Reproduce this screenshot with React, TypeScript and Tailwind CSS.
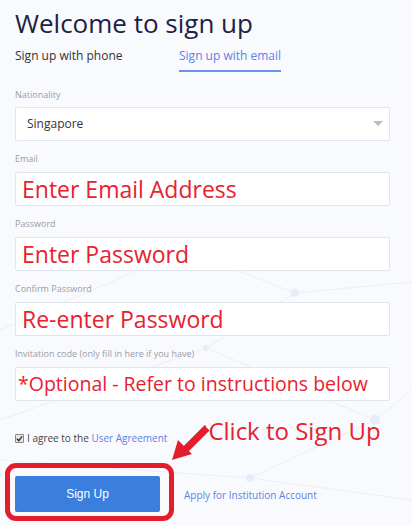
export default function App() {
  const fields = [
    { label: 'Email', text: 'Enter Email Address', size: 'text-[23px] pl-[6px]' },
    { label: 'Password', text: 'Enter Password', size: 'text-[23px] pl-[6px]' },
    { label: 'Confirm Password', text: 'Re-enter Password', size: 'text-[23px] pl-[6px]' },
    {
      label: 'Invitation code (only fill in here if you have)',
      text: '*Optional - Refer to instructions below',
      size: 'text-[19.5px] pl-[2px]',
    },
  ]

  return (
    <div
      className="relative w-[412px] h-[526px] overflow-hidden bg-[#f9fafd]"
      style={{ fontFamily: '"Open Sans", "Noto Sans", sans-serif' }}
    >
      {/* faint network pattern in the background */}
      <svg className="absolute inset-0" width="412" height="526" viewBox="0 0 412 526">
        <g stroke="#eceef7" strokeWidth="1" fill="none">
          <line x1="0" y1="330" x2="185" y2="250" />
          <line x1="185" y1="250" x2="295" y2="293" />
          <line x1="295" y1="293" x2="206" y2="348" />
          <line x1="206" y1="348" x2="0" y2="420" />
          <line x1="295" y1="293" x2="412" y2="282" />
          <line x1="206" y1="348" x2="375" y2="420" />
          <line x1="375" y1="420" x2="250" y2="478" />
          <line x1="250" y1="478" x2="412" y2="500" />
          <line x1="375" y1="420" x2="412" y2="390" />
          <line x1="0" y1="460" x2="250" y2="478" />
        </g>
        <g fill="#e8ebf8">
          <circle cx="295" cy="293" r="4" />
          <circle cx="206" cy="348" r="3" />
          <circle cx="375" cy="420" r="5" />
          <circle cx="250" cy="478" r="4" />
          <circle cx="185" cy="250" r="2" />
        </g>
      </svg>

      <div className="relative flex flex-col pl-[15px] pr-[22px]">
        <h1 className="mt-[3px] text-[26px] leading-[40px] text-[#1d2242]">Welcome to sign up</h1>

        <div className="mt-[4px] flex text-[12px] leading-[18px]">
          <div className="w-[164px] text-[#333]">Sign up with phone</div>
          <div className="flex flex-col text-[#5b83e6]">
            <span>Sign up with email</span>
            <span className="mt-[5px] h-[2px] bg-[#6b8ff0]" />
          </div>
        </div>

        <div className="mt-[17px] text-[9px] leading-[12px] text-[#9a9ca6]">Nationality</div>
        <div className="mt-[6px] flex h-[34px] items-center justify-between rounded-[2px] border border-[#e3e5ee] bg-white pl-[11px] pr-[6px]">
          <span className="text-[12px] text-[#333]">Singapore</span>
          <svg width="10" height="6" viewBox="0 0 10 6">
            <path d="M0 0 L10 0 L5 5 Z" fill="#b9bcc4" />
          </svg>
        </div>

        {fields.map((f) => (
          <div key={f.label} className="flex flex-col">
            <div className="mt-[12px] text-[9px] leading-[12px] text-[#9a9ca6]">{f.label}</div>
            <div className="mt-[7px] flex h-[34px] items-center overflow-hidden whitespace-nowrap rounded-[2px] border border-[#e3e5ee] bg-white">
              <span className={`${f.size} leading-none text-[#e8212f]`}>{f.text}</span>
            </div>
          </div>
        ))}

        <div className="mt-[20px] flex h-[30px] items-center whitespace-nowrap">
          <span className="mt-[5px] flex h-[9px] w-[9px] items-center justify-center rounded-[1px] border border-[#8a8a8a] bg-[#e6e6e6]">
            <svg width="7" height="7" viewBox="0 0 8 8">
              <path d="M1 4.2 L3.2 6.4 L7 1.6" stroke="#333" strokeWidth="1.6" fill="none" />
            </svg>
          </span>
          <span className="ml-[3px] mt-[5px] text-[10px] text-[#444]">
            I agree to the <span className="text-[#5b83e6]">User Agreement</span>
          </span>
          <span className="ml-[41px] -mt-[10px] text-[24px] leading-none text-[#e8212f]">Click to Sign Up</span>
        </div>

        <div className="mt-[12px] flex items-center">
          <div className="-ml-[10px] rounded-[11px] border-[5px] border-[#e51c2c] pl-[5px] pr-[9px] pt-[8px] pb-[4px]">
            <button
              className="block h-[36px] w-[145px] rounded-[2px] bg-[#3a7fde] text-[12px] text-white"
              style={{ fontFamily: '"Liberation Sans", Arial, sans-serif' }}
            >
              Sign Up
            </button>
          </div>
          <span className="ml-[10px] mt-[6px] text-[10px] text-[#5b83e6]">Apply for Institution Account</span>
        </div>
      </div>

      {/* red annotation arrow */}
      <svg className="absolute left-[170px] top-[422px]" width="42" height="42" viewBox="0 0 42 42">
        <path d="M36 4 L15 25 L22 32 L2 38 L8 18 L14 24 L35 3 Z" fill="#e51c2c" />
        <line x1="37" y1="6" x2="16" y2="27" stroke="#e51c2c" strokeWidth="7" />
      </svg>
    </div>
  )
}
